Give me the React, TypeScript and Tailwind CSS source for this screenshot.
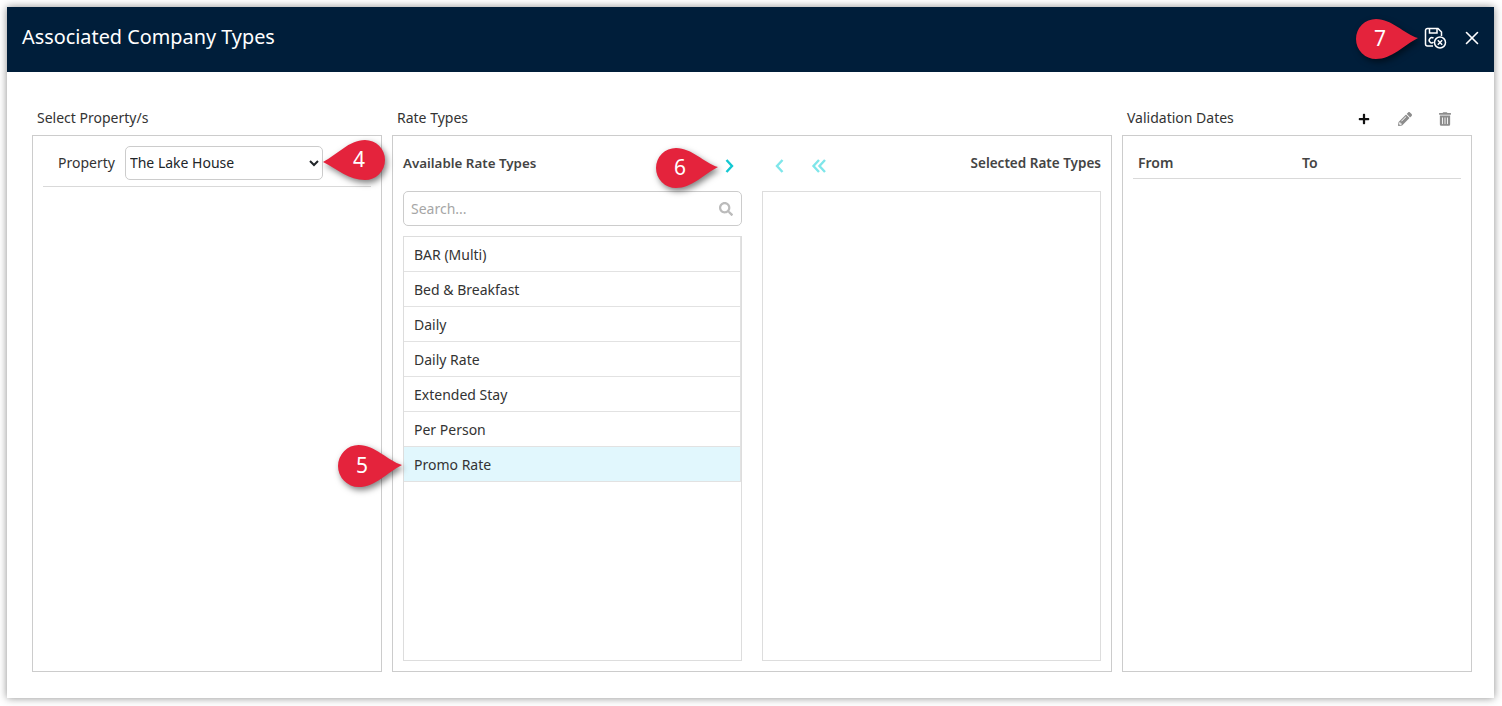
import { FaPencilAlt, FaPlus, FaSearch, FaTrashAlt } from "react-icons/fa";
import { X } from "lucide-react";

const rateTypes = ["BAR (Multi)", "Bed & Breakfast", "Daily", "Daily Rate", "Extended Stay", "Per Person", "Promo Rate"];

function Pin({ n, side, className }: { n: number; side: "left" | "right"; className: string }) {
  return (
    <div className={`absolute ${className}`}>
      <svg
        viewBox="0 0 62 40"
        preserveAspectRatio="none"
        className="h-full w-full drop-shadow-[2px_3px_3px_rgba(0,0,0,0.5)]"
      >
        {side === "right" ? (
          <path d="M62 19C48 15 36 0 20 0A20 20 0 0 0 20 40C36 40 48 26 62 19Z" fill="#e4233c" />
        ) : (
          <path d="M0 22C14 15 26 0 42 0A20 20 0 0 1 42 40C26 40 14 29 0 22Z" fill="#e4233c" />
        )}
      </svg>
      <span
        className={`absolute inset-y-0 flex items-center text-[21px] text-white ${side === "right" ? "left-[18px]" : "left-[30px]"}`}
      >
        {n}
      </span>
    </div>
  );
}

function SaveCancelIcon() {
  return (
    <svg viewBox="0 0 24 24" fill="none" stroke="#ffffff" strokeWidth="1.5" className="h-6 w-6">
      <path d="M10 20H4.5A2 2 0 0 1 2.5 18V4.5A2 2 0 0 1 4.5 2.5H15L18.5 6V10" />
      <path d="M6.5 2.5V7H14V2.5" />
      <path d="M10.5 12.2A2.6 2.6 0 1 0 10.5 16.2" />
      <circle cx="17" cy="16.5" r="5.5" />
      <path d="M14.8 14.3L19.2 18.7M19.2 14.3L14.8 18.7" />
    </svg>
  );
}

function Chevron({ dir, className }: { dir: "left" | "right"; className: string }) {
  return (
    <svg viewBox="0 0 10 16" fill="none" stroke="currentColor" strokeWidth="2.4" className={`h-4 w-[10px] ${className}`}>
      <path d={dir === "right" ? "M2.5 2L8 8L2.5 14" : "M7.5 2L2 8L7.5 14"} />
    </svg>
  );
}

function DoubleChevronLeft({ className }: { className: string }) {
  return (
    <svg viewBox="0 0 16 16" fill="none" stroke="currentColor" strokeWidth="2.4" className={`h-4 w-4 ${className}`}>
      <path d="M8 2L2.5 8L8 14M14 2L8.5 8L14 14" />
    </svg>
  );
}

export default function App() {
  return (
    <div className="relative h-[706px] w-[1502px] overflow-hidden bg-white p-[7px] font-['Open_Sans',sans-serif] text-[14px] text-[#333333]">
      <div className="flex h-[691px] w-[1487px] flex-col bg-white shadow-[0_0_8px_rgba(0,0,0,0.45)]">
        {/* Header */}
        <div className="flex h-[65px] items-center justify-between bg-[#001e3a] pl-[15px] pr-[11px]">
          <h1 className="pb-[6px] text-[19.85px] text-white">Associated Company Types</h1>
          <div className="flex items-center gap-[14px] pb-[4px]">
            <SaveCancelIcon />
            <X className="h-[22px] w-[22px] text-white" strokeWidth={1.75} />
          </div>
        </div>

        {/* Body */}
        <div className="flex flex-1 gap-[10px] pb-[26px] pl-[25px] pr-[22px] pt-[35px]">
          <section className="flex w-[350px] flex-col">
            <div className="flex h-[28px] items-center pb-[8px] pl-[5px]">Select Property/s</div>
            <div className="flex-1 border border-[#cccccc] px-[10px] pt-[10px]">
              <div className="flex h-[41px] items-start gap-[10px] border-b border-[#d9d9d9] pl-[15px]">
                <label className="leading-[34px]">Property</label>
                <select className="h-[34px] w-[198px] rounded-[5px] border border-[#cccccc] bg-white pb-[2px] text-[#212529]">
                  <option>The Lake House</option>
                </select>
              </div>
            </div>
          </section>

          <section className="flex w-[720px] flex-col">
            <div className="flex h-[28px] items-center pb-[8px] pl-[5px]">Rate Types</div>
            <div className="flex flex-1 gap-[20px] border border-[#cccccc] px-[10px] pb-[10px]">
              <div className="flex w-[339px] flex-col">
                <div className="flex h-[55px] items-start justify-between pr-[8px] pt-[17px]">
                  <span className="text-[13.35px] leading-[20px] font-semibold text-[#444444]">Available Rate Types</span>
                  <Chevron dir="right" className="mt-[5px] text-[#12c8d2]" />
                </div>
                <div className="flex h-[35px] items-center justify-between rounded-[5px] border border-[#cccccc] pl-[7px] pr-[8px]">
                  <span className="text-[#a6a6a6]">Search...</span>
                  <FaSearch className="h-[14px] w-[14px] text-[#bbbbbb]" />
                </div>
                <ul className="mt-[10px] flex-1 border border-[#dddddd]">
                  {rateTypes.map((r) => (
                    <li
                      key={r}
                      className={`flex h-[35px] items-center border-b border-r border-[#e2e2e2] pl-[10px] ${
                        r === "Promo Rate" ? "bg-[#e1f7fd]" : "bg-white"
                      }`}
                    >
                      {r}
                    </li>
                  ))}
                </ul>
              </div>
              <div className="flex w-[339px] flex-col">
                <div className="flex h-[55px] items-start justify-between pt-[17px]">
                  <div className="flex items-center gap-[26px] pl-[13px] pt-[5px]">
                    <Chevron dir="left" className="text-[#7fe6ea]" />
                    <DoubleChevronLeft className="text-[#7fe6ea]" />
                  </div>
                  <span className="text-[13.5px] leading-[20px] font-semibold text-[#444444]">Selected Rate Types</span>
                </div>
                <div className="flex-1 border border-[#dddddd]" />
              </div>
            </div>
          </section>

          <section className="flex w-[350px] flex-col">
            <div className="flex h-[28px] items-center justify-between pb-[8px] pl-[5px] pr-[21px]">
              <span>Validation Dates</span>
              <div className="flex items-center gap-[27px] pt-[4px]">
                <FaPlus className="mr-[1px] h-[12px] w-[12px] text-[#111111]" />
                <FaPencilAlt className="h-[14px] w-[14px] text-[#8c8c8c]" />
                <FaTrashAlt className="h-[14px] w-[12px] text-[#8c8c8c]" />
              </div>
            </div>
            <div className="flex-1 border border-[#cccccc] px-[10px] pt-[10px]">
              <div className="flex h-[33px] items-center border-b border-[#d9d9d9] pl-[5px] font-semibold text-[#444444]">
                <span className="w-[164px]">From</span>
                <span>To</span>
              </div>
            </div>
          </section>
        </div>
      </div>

      <Pin n={4} side="left" className="left-[323px] top-[140px] h-10 w-[62px]" />
      <Pin n={5} side="right" className="left-[338px] top-[445px] h-[42px] w-16" />
      <Pin n={6} side="right" className="left-[656px] top-[148px] h-10 w-[62px]" />
      <Pin n={7} side="right" className="left-[1356px] top-[19px] h-10 w-[62px]" />
    </div>
  );
}
